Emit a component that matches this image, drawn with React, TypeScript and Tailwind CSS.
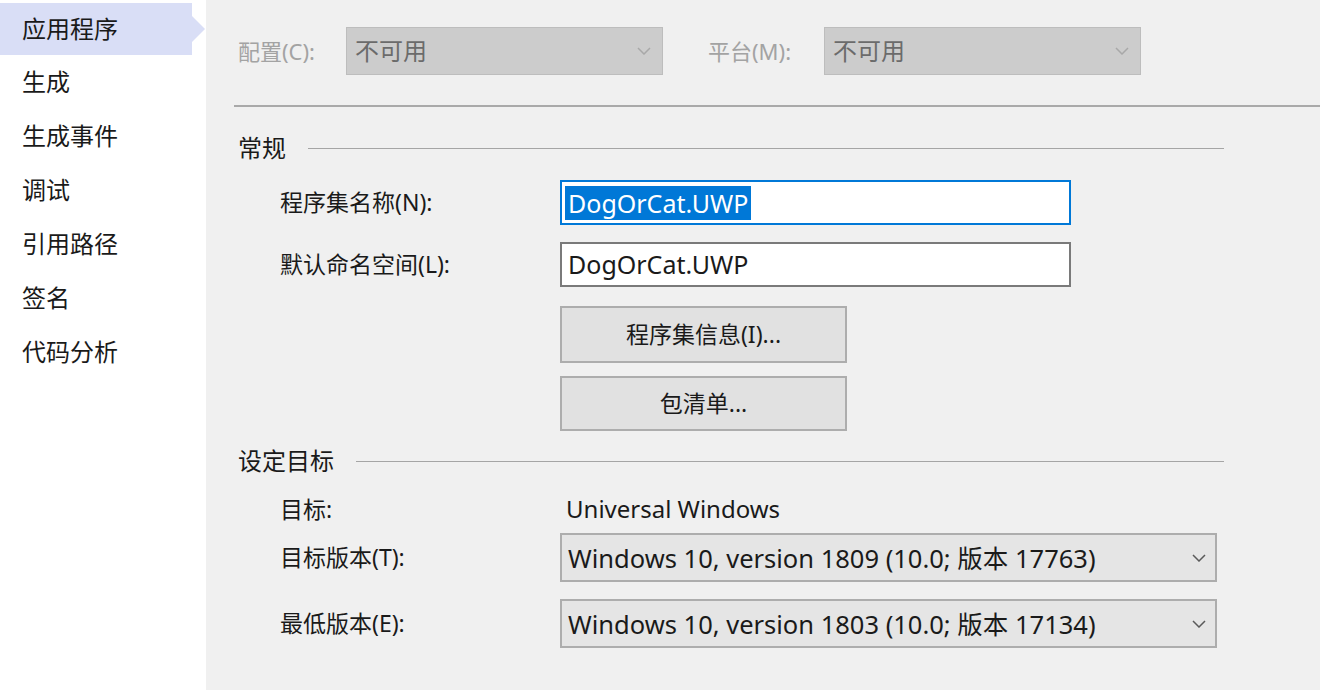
const font = { fontFamily: '"Noto Sans", "Noto Sans CJK SC", sans-serif' };

const navItems = ['应用程序', '生成', '生成事件', '调试', '引用路径', '签名', '代码分析'];

function Chevron({ className }: { className?: string }) {
  return (
    <svg width="14" height="8" viewBox="0 0 14 8" className={className}>
      <path d="M1 1 L7 7 L13 1" fill="none" stroke="currentColor" strokeWidth="1.5" />
    </svg>
  );
}

function SectionTitle({ title }: { title: string }) {
  return (
    <div className="flex items-center pl-[4px] pr-[96px]">
      <span className="text-[24px] leading-[30px] text-[#1a1a1a]">{title}</span>
      <div className="ml-[22px] flex-1 border-t border-[#a5a5a5]" />
    </div>
  );
}

function Label({ children }: { children: React.ReactNode }) {
  return <div className="w-[326px] shrink-0 pl-[46px] text-[23px] text-[#1a1a1a]">{children}</div>;
}

function DisabledSelect() {
  return (
    <div className="flex h-[48px] w-[317px] items-center justify-between border border-[#bdbdbd] bg-[#cccccc] pl-[8px] pr-[11px]">
      <span className="text-[24px] text-[#6b6b6b]">不可用</span>
      <Chevron className="text-[#a8a8a8]" />
    </div>
  );
}

function VersionSelect({ value }: { value: string }) {
  return (
    <div className="flex h-[49px] w-[657px] items-center justify-between border-2 border-[#adadad] bg-[#e5e5e5] pl-[6px] pr-[9px]">
      <span className="text-[25.5px] leading-[34px] text-[#1a1a1a]">{value}</span>
      <Chevron className="text-[#5a5a5a]" />
    </div>
  );
}

function Button({ children, className }: { children: React.ReactNode; className?: string }) {
  return (
    <div
      className={`flex w-[287px] items-center justify-center border-2 border-[#adadad] bg-[#e1e1e1] text-[23px] text-[#1a1a1a] ${className ?? ''}`}
    >
      {children}
    </div>
  );
}

export default function App() {
  return (
    <div className="flex h-[690px] w-[1320px] overflow-hidden bg-white" style={font}>
      <aside className="w-[206px] shrink-0 bg-white pt-[3px]">
        {navItems.map((item, i) =>
          i === 0 ? (
            <div key={item} className="relative flex h-[52px] w-[192px] items-center bg-[#d9def6] pl-[22px] text-[24px] text-[#1a1a1a]">
              {item}
              <div className="absolute left-[192px] top-[13px] h-0 w-0 border-y-[13px] border-l-[13px] border-y-transparent border-l-[#d9def6]" />
            </div>
          ) : (
            <div key={item} className="flex h-[54px] items-center pl-[22px] text-[24px] text-[#1a1a1a]">
              {item}
            </div>
          ),
        )}
      </aside>

      <main className="flex-1 bg-[#f0f0f0] pl-[28px]">
        <div className="flex items-center pt-[27px]">
          <span className="w-[112px] pl-[4px] text-[22px] text-[#a3a3a3]">配置(C):</span>
          <DisabledSelect />
          <span className="ml-[45px] w-[116px] text-[22px] text-[#a3a3a3]">平台(M):</span>
          <DisabledSelect />
        </div>

        <div className="mt-[30px] border-t-2 border-[#a9a9a9]" />

        <div className="mt-[26px]">
          <SectionTitle title="常规" />
        </div>

        <div className="mt-[17px] flex items-center">
          <Label>程序集名称(N):</Label>
          <div className="flex h-[45px] w-[511px] items-center border-2 border-[#0078d7] bg-white pl-[3px]">
            <span className="bg-[#0078d7] px-[3px] text-[25px] leading-[34px] text-white">DogOrCat.UWP</span>
          </div>
        </div>

        <div className="mt-[17px] flex items-center">
          <Label>默认命名空间(L):</Label>
          <div className="flex h-[45px] w-[511px] items-center border-2 border-[#7a7a7a] bg-white pl-[6px]">
            <span className="text-[25px] text-[#1a1a1a]">DogOrCat.UWP</span>
          </div>
        </div>

        <div className="mt-[19px] flex">
          <div className="w-[326px] shrink-0" />
          <div className="flex flex-col gap-[13px]">
            <Button className="h-[57px]">程序集信息(I)...</Button>
            <Button className="h-[55px]">包清单...</Button>
          </div>
        </div>

        <div className="mt-[15px]">
          <SectionTitle title="设定目标" />
        </div>

        <div className="mt-[15px] flex items-center">
          <Label>目标:</Label>
          <span className="pl-[6px] text-[24px] text-[#1a1a1a]">Universal Windows</span>
        </div>

        <div className="mt-[6px] flex items-center">
          <Label>目标版本(T):</Label>
          <VersionSelect value="Windows 10, version 1809 (10.0; 版本 17763)" />
        </div>

        <div className="mt-[17px] flex items-center">
          <Label>最低版本(E):</Label>
          <VersionSelect value="Windows 10, version 1803 (10.0; 版本 17134)" />
        </div>
      </main>
    </div>
  );
}
